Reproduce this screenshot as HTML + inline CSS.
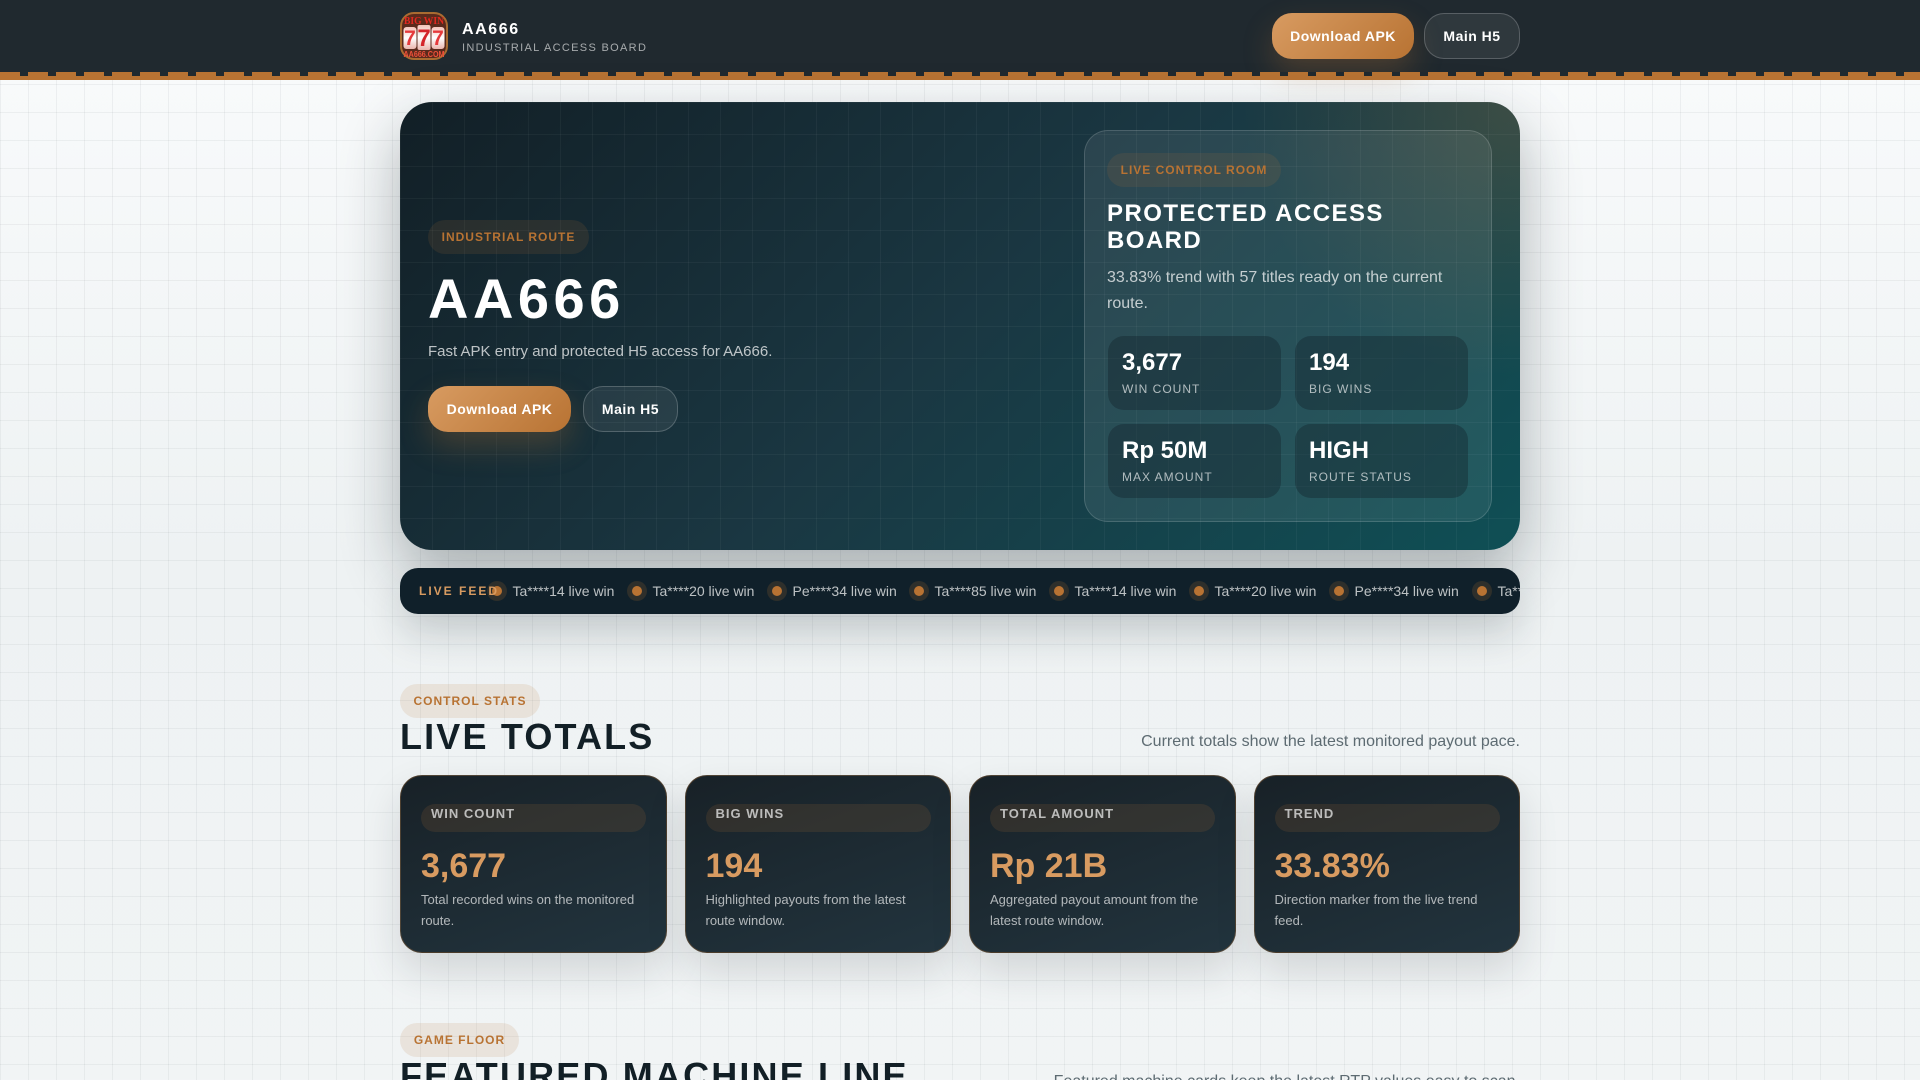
<!DOCTYPE html>
<html lang="en"><head><meta charset="utf-8"><title>AA666</title>
<style>
*{box-sizing:border-box;margin:0;padding:0}
html,body{width:1920px;height:1080px;overflow:hidden}
body{position:relative;font-family:"Liberation Sans",sans-serif;color:#121f26;
background:linear-gradient(rgba(18,31,38,.05) 1px,transparent 1px) 0 0/28px 28px,linear-gradient(90deg,rgba(18,31,38,.05) 1px,transparent 1px) 0 0/28px 28px,linear-gradient(180deg,#f8fafb 70px,#eef2f3 560px,#f1f4f5 1080px)}
.a{position:absolute;white-space:nowrap}
header{position:absolute;left:0;top:0;width:1920px;height:80px;background:#20292f}
.teeth{position:absolute;left:0;top:72px;width:1920px;height:4px;background:repeating-linear-gradient(90deg,#b87333 0 20px,#20292f 20px 28px)}
.band{position:absolute;left:0;top:76px;width:1920px;height:4px;background:#b87333}
.btn{position:absolute;height:46px;border-radius:20px;font-weight:700;font-size:14px;letter-spacing:.5px;line-height:46px;text-align:center;color:#fff;white-space:nowrap}
.pri{background:linear-gradient(135deg,#d89b61,#b87333);box-shadow:0 14px 30px rgba(184,115,51,.28)}
.sec{background:rgba(255,255,255,.07);border:1px solid rgba(255,255,255,.2);line-height:44px}
.hero{position:absolute;left:400px;top:102px;width:1120px;height:448px;border-radius:32px;overflow:hidden;
background:linear-gradient(rgba(255,255,255,.04) 1px,transparent 1px) 0 0/32px 32px,linear-gradient(90deg,rgba(255,255,255,.04) 1px,transparent 1px) 0 0/32px 32px,radial-gradient(circle at 100% 0,rgba(184,115,51,.24),transparent 23%),linear-gradient(135deg,#121f26 0,#1a3742 50%,#0f4f55 100%)}
.heroshadow{position:absolute;left:400px;top:102px;width:1120px;height:448px;border-radius:32px;box-shadow:0 24px 60px rgba(18,31,38,.32)}
.tag{position:absolute;height:34px;line-height:34px;border-radius:17px;font-size:12px;font-weight:700;letter-spacing:1px;color:#b87333;background:rgba(184,115,51,.13);text-align:center;white-space:nowrap}
.panel{position:absolute;left:684px;top:28px;width:408px;height:392px;border-radius:24px;background:rgba(255,255,255,.08);border:1px solid rgba(255,255,255,.15)}
.tile{position:absolute;width:173px;height:74px;border-radius:16px;background:rgba(18,31,38,.36)}
.tile b{position:absolute;left:14px;top:13px;font-size:24px;line-height:28px;color:#fff;white-space:nowrap}
.tile span{position:absolute;left:14px;top:46px;font-size:12px;line-height:14px;letter-spacing:1px;color:rgba(255,255,255,.65);white-space:nowrap}
.ticker{position:absolute;left:400px;top:568px;width:1120px;height:46px;border-radius:18px;background:#10202a;overflow:hidden}
.tickshadow{position:absolute;left:400px;top:568px;width:1120px;height:46px;border-radius:18px;box-shadow:0 20px 40px rgba(18,31,38,.18)}
.ticker .i{position:absolute;top:0;height:46px;line-height:46px;font-size:14px;color:rgba(255,255,255,.72);white-space:nowrap;padding-left:25.5px}
.ticker .i::before{content:"";position:absolute;left:0;top:13px;width:20px;height:20px;border-radius:50%;background:rgba(184,115,51,.18)}
.ticker .i::after{content:"";position:absolute;left:5px;top:18px;width:10px;height:10px;border-radius:50%;background:#b87333}
.title{position:absolute;left:400px;font-size:36px;font-weight:700;letter-spacing:2.16px;line-height:40px;color:#121f26;white-space:nowrap}
.rt{position:absolute;right:400px;font-size:16px;line-height:24px;color:#5d6b72;white-space:nowrap}
.card{position:absolute;top:775px;width:266.5px;height:178px;border-radius:22px;border:1px solid rgba(184,115,51,.32);background:linear-gradient(160deg,#182127 0,#22343e 100%);box-shadow:0 18px 40px rgba(18,31,38,.14)}
.pill{position:absolute;left:20px;top:28px;width:225px;height:28px;border-radius:14px;background:rgba(184,115,51,.15);padding-left:10px;font-size:13px;font-weight:700;letter-spacing:1px;line-height:20px;color:rgba(255,255,255,.68);white-space:nowrap}
.num{position:absolute;left:20px;top:70px;font-size:34px;font-weight:700;line-height:40px;color:#d89b61;white-space:nowrap}
.card p{position:absolute;left:20px;top:113px;width:226px;font-size:13px;line-height:21px;color:rgba(255,255,255,.66)}
</style></head><body>
<header>
<svg class="a" style="left:400px;top:12px" width="48" height="48" viewBox="0 0 48 48">
<defs><linearGradient id="r" x1="0" y1="0" x2="0" y2="1"><stop offset="0" stop-color="#f4c4ba"/><stop offset=".5" stop-color="#fff"/><stop offset="1" stop-color="#eab6ae"/></linearGradient></defs>
<rect x="1" y="1" width="46" height="46" rx="13" fill="#5a2a1c" stroke="#a96b31" stroke-width="2"/>
<rect x="3.5" y="15" width="13" height="22" rx="3" fill="url(#r)"/><rect x="17.5" y="13" width="13" height="25" rx="2" fill="url(#r)"/><rect x="31.5" y="15" width="13" height="22" rx="3" fill="url(#r)"/>
<text x="24" y="12" font-family="Liberation Serif" font-weight="700" font-size="11" text-anchor="middle" fill="#e2291f" textLength="40" lengthAdjust="spacingAndGlyphs">BIG WIN</text>
<text x="10" y="33" font-family="Liberation Sans" font-weight="700" font-size="21" text-anchor="middle" fill="#e53a3c">7</text>
<text x="24" y="34" font-family="Liberation Sans" font-weight="700" font-size="24" text-anchor="middle" fill="#d4252b">7</text>
<text x="38" y="33" font-family="Liberation Sans" font-weight="700" font-size="21" text-anchor="middle" fill="#e53a3c">7</text>
<text x="24" y="45" font-family="Liberation Sans" font-weight="700" font-size="8" text-anchor="middle" fill="#f0503a" textLength="41" lengthAdjust="spacingAndGlyphs">AA666.COM</text>
</svg>
<div class="a" style="left:462px;top:20px;font-size:16px;font-weight:700;letter-spacing:1.6px;line-height:20px;color:#fff">AA666</div>
<div class="a" style="left:462px;top:41px;font-size:11px;letter-spacing:1.32px;line-height:14px;color:rgba(255,255,255,.6)">INDUSTRIAL ACCESS BOARD</div>
<div class="btn pri" style="left:1272px;top:13px;width:142px">Download APK</div>
<div class="btn sec" style="left:1424px;top:13px;width:96px">Main H5</div>
<div class="teeth"></div><div class="band"></div>
</header>
<div class="heroshadow"></div>
<div class="hero">
<div class="tag" style="left:28px;top:118px;width:161px">INDUSTRIAL ROUTE</div>
<div class="a" style="left:28px;top:165px;font-size:56px;font-weight:700;letter-spacing:4.5px;line-height:64px;color:#fff">AA666</div>
<div class="a" style="left:28px;top:238px;font-size:15px;line-height:24px;color:rgba(255,255,255,.72)">Fast APK entry and protected H5 access for AA666.</div>
<div class="btn pri" style="left:28px;top:284px;width:143px">Download APK</div>
<div class="btn sec" style="left:183px;top:284px;width:95px">Main H5</div>
<div class="panel">
<div class="tag" style="left:22px;top:22px;width:174px">LIVE CONTROL ROOM</div>
<div class="a" style="left:22px;top:70px;font-size:24px;font-weight:700;letter-spacing:1.44px;line-height:26.5px;color:#fff">PROTECTED ACCESS<br>BOARD</div>
<div class="a" style="left:22px;top:134px;font-size:16px;line-height:26.4px;color:rgba(255,255,255,.72)">33.83% trend with 57 titles ready on the current<br>route.</div>
<div class="tile" style="left:23px;top:205px"><b>3,677</b><span>WIN COUNT</span></div>
<div class="tile" style="left:210px;top:205px"><b>194</b><span>BIG WINS</span></div>
<div class="tile" style="left:23px;top:293px"><b>Rp 50M</b><span>MAX AMOUNT</span></div>
<div class="tile" style="left:210px;top:293px"><b>HIGH</b><span>ROUTE STATUS</span></div>
</div>
</div>
<div class="tickshadow"></div>
<div class="ticker">
<div class="i" style="left:87px">Ta****14 live win</div>
<div class="i" style="left:227px">Ta****20 live win</div>
<div class="i" style="left:367px">Pe****34 live win</div>
<div class="i" style="left:509px">Ta****85 live win</div>
<div class="i" style="left:649px">Ta****14 live win</div>
<div class="i" style="left:789px">Ta****20 live win</div>
<div class="i" style="left:929px">Pe****34 live win</div>
<div class="i" style="left:1072px">Ta****85 live win</div>
<div class="a" style="left:19px;top:0;font-size:12px;font-weight:700;letter-spacing:2px;line-height:46px;color:#d89b61">LIVE FEED</div>
</div>
<div class="tag" style="left:400px;top:684px;width:140px">CONTROL STATS</div>
<div class="title" style="top:717px">LIVE TOTALS</div>
<div class="rt" style="top:730px">Current totals show the latest monitored payout pace.</div>
<div class="card" style="left:400px"><div class="pill">WIN COUNT</div><div class="num">3,677</div><p>Total recorded wins on the monitored route.</p></div>
<div class="card" style="left:684.5px"><div class="pill">BIG WINS</div><div class="num">194</div><p>Highlighted payouts from the latest route window.</p></div>
<div class="card" style="left:969px"><div class="pill">TOTAL AMOUNT</div><div class="num">Rp 21B</div><p>Aggregated payout amount from the latest route window.</p></div>
<div class="card" style="left:1253.5px"><div class="pill">TREND</div><div class="num">33.83%</div><p>Direction marker from the live trend feed.</p></div>
<div class="tag" style="left:400px;top:1023px;width:119px">GAME FLOOR</div>
<div class="title" style="top:1056px">FEATURED MACHINE LINE</div>
<div class="rt" style="top:1070px">Featured machine cards keep the latest RTP values easy to scan.</div>
</body></html>
